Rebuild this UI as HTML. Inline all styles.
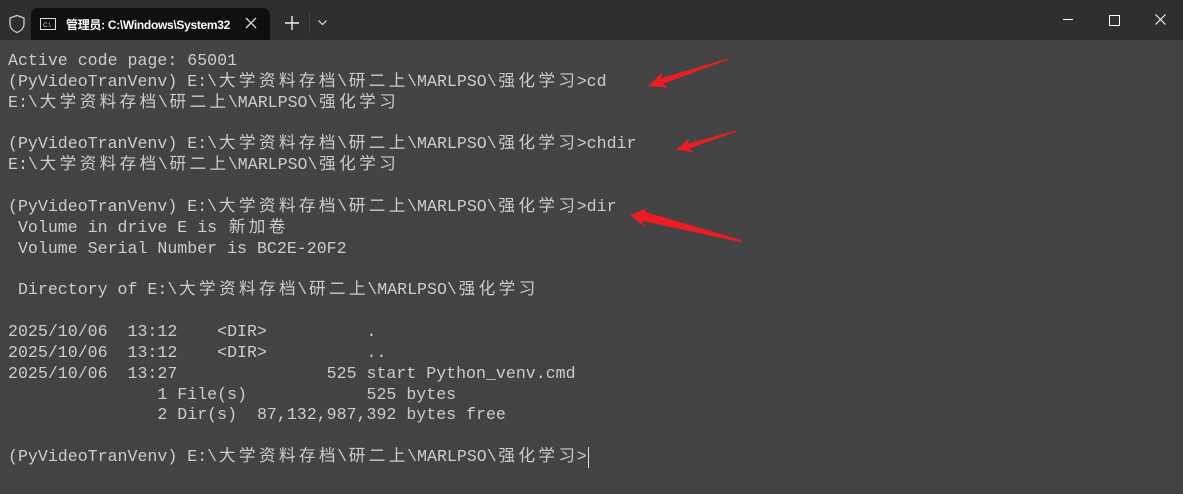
<!DOCTYPE html>
<html><head><meta charset="utf-8"><style>
html,body{margin:0;padding:0;width:1183px;height:494px;overflow:hidden;background:#434343;}
#tb{position:absolute;left:0;top:0;width:1183px;height:40px;background:#2e2e2e;}
#tab{position:absolute;left:31px;top:8px;width:239px;height:32px;background:#0f0f0f;border-radius:7px 7px 0 0;}
#tab .t{position:absolute;left:35px;top:8px;color:#fff;font:bold 12px "Liberation Sans","Noto Sans CJK SC",sans-serif;letter-spacing:-0.3px;}
#term{position:absolute;left:8px;top:51px;color:#cccccc;font:16.6px/20.85px "Liberation Mono","Noto Sans CJK SC",monospace;white-space:pre;}
.c{display:inline-block;width:20px;text-align:center;}
#cur{position:absolute;left:588px;top:447px;width:1px;height:21px;background:#ddd;}
</style></head><body>
<div id="tb">
<svg style="position:absolute;left:8px;top:14px" width="18" height="20" viewBox="0 0 18 20"><path d="M9 1.5 L16 4 V10 C16 14 13 17 9 18.5 C5 17 2 14 2 10 V4 Z" fill="none" stroke="#ccc" stroke-width="1.3"/></svg>
<div id="tab">
<svg style="position:absolute;left:9px;top:10px" width="16" height="12" viewBox="0 0 16 12"><rect x="0.5" y="0.5" width="15" height="11" fill="none" stroke="#ddd"/><text x="3" y="9" font-size="6" fill="#ddd" font-family="Liberation Sans">C:\</text></svg>
<div class="t">管理员: C:\Windows\System32</div>
<svg style="position:absolute;left:214px;top:9px" width="12" height="12" viewBox="0 0 12 12"><path d="M1 1 L11 11 M11 1 L1 11" stroke="#ddd" stroke-width="1.3"/></svg>
</div>
<svg style="position:absolute;left:285px;top:16px" width="14" height="14"><path d="M7 0 V14 M0 7 H14" stroke="#eee" stroke-width="1.4"/></svg>
<div style="position:absolute;left:309px;top:13px;width:1px;height:20px;background:#444"></div>
<svg style="position:absolute;left:318px;top:20px" width="9" height="6"><path d="M0.5 0.5 L4.5 4.5 L8.5 0.5" stroke="#ddd" fill="none" stroke-width="1.2"/></svg>
<div style="position:absolute;left:1063px;top:19px;width:10px;height:1px;background:#fff"></div>
<div style="position:absolute;left:1109px;top:15px;width:9px;height:9px;border:1px solid #fff"></div>
<svg style="position:absolute;left:1155px;top:14px" width="11" height="11"><path d="M0.5 0.5 L10.5 10.5 M10.5 0.5 L0.5 10.5" stroke="#fff" stroke-width="1.1"/></svg>
</div>
<div id="term">Active code page: 65001
(PyVideoTranVenv) E:\<span class="c">大</span><span class="c">学</span><span class="c">资</span><span class="c">料</span><span class="c">存</span><span class="c">档</span>\<span class="c">研</span><span class="c">二</span><span class="c">上</span>\MARLPSO\<span class="c">强</span><span class="c">化</span><span class="c">学</span><span class="c">习</span>&gt;cd
E:\<span class="c">大</span><span class="c">学</span><span class="c">资</span><span class="c">料</span><span class="c">存</span><span class="c">档</span>\<span class="c">研</span><span class="c">二</span><span class="c">上</span>\MARLPSO\<span class="c">强</span><span class="c">化</span><span class="c">学</span><span class="c">习</span>

(PyVideoTranVenv) E:\<span class="c">大</span><span class="c">学</span><span class="c">资</span><span class="c">料</span><span class="c">存</span><span class="c">档</span>\<span class="c">研</span><span class="c">二</span><span class="c">上</span>\MARLPSO\<span class="c">强</span><span class="c">化</span><span class="c">学</span><span class="c">习</span>&gt;chdir
E:\<span class="c">大</span><span class="c">学</span><span class="c">资</span><span class="c">料</span><span class="c">存</span><span class="c">档</span>\<span class="c">研</span><span class="c">二</span><span class="c">上</span>\MARLPSO\<span class="c">强</span><span class="c">化</span><span class="c">学</span><span class="c">习</span>

(PyVideoTranVenv) E:\<span class="c">大</span><span class="c">学</span><span class="c">资</span><span class="c">料</span><span class="c">存</span><span class="c">档</span>\<span class="c">研</span><span class="c">二</span><span class="c">上</span>\MARLPSO\<span class="c">强</span><span class="c">化</span><span class="c">学</span><span class="c">习</span>&gt;dir
 Volume in drive E is <span class="c">新</span><span class="c">加</span><span class="c">卷</span>
 Volume Serial Number is BC2E-20F2

 Directory of E:\<span class="c">大</span><span class="c">学</span><span class="c">资</span><span class="c">料</span><span class="c">存</span><span class="c">档</span>\<span class="c">研</span><span class="c">二</span><span class="c">上</span>\MARLPSO\<span class="c">强</span><span class="c">化</span><span class="c">学</span><span class="c">习</span>

2025/10/06  13:12    &lt;DIR&gt;          .
2025/10/06  13:12    &lt;DIR&gt;          ..
2025/10/06  13:27               525 start Python_venv.cmd
               1 File(s)            525 bytes
               2 Dir(s)  87,132,987,392 bytes free

(PyVideoTranVenv) E:\<span class="c">大</span><span class="c">学</span><span class="c">资</span><span class="c">料</span><span class="c">存</span><span class="c">档</span>\<span class="c">研</span><span class="c">二</span><span class="c">上</span>\MARLPSO\<span class="c">强</span><span class="c">化</span><span class="c">学</span><span class="c">习</span>&gt;</div>
<div id="cur"></div>
<svg style="position:absolute;left:0;top:0" width="1183" height="494">
<g fill="#ec1c24">
<polygon points="648,86 662.4,72.4 661,78.2 728,58.5 728.4,59.6 663,83.8 667.6,87.6"/>
<polygon points="676,150 689.1,138.5 687.6,143.7 736,130.5 736.3,131.6 689.2,148.5 693.3,151.9"/>
<polygon points="630,215 647,208 645,212 741,240 740.5,242 642,221 645,227"/>
</g>
</svg>
</body></html>
